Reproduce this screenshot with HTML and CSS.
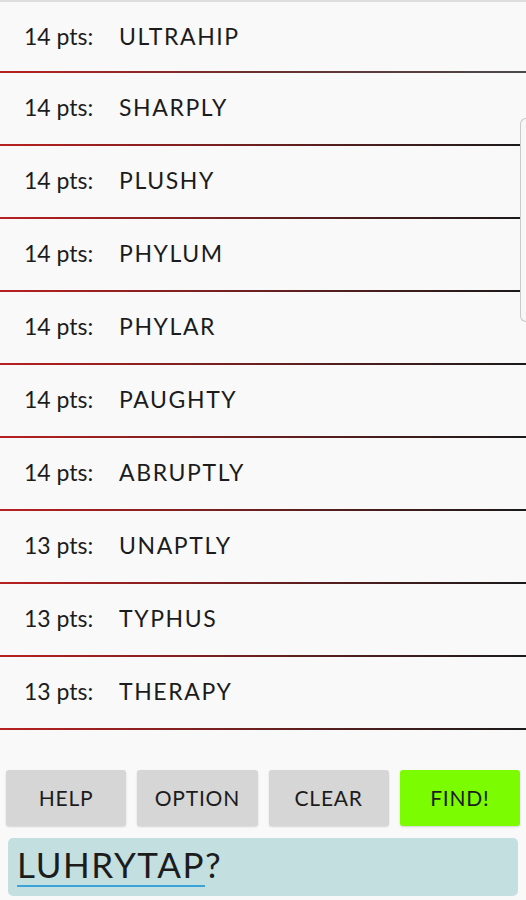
FILE: index.html
```html
<!DOCTYPE html>
<html lang="en">
<head>
    <meta charset="UTF-8">
    <meta name="viewport" content="width=device-width, initial-scale=1.0">
    <title>Word Finder</title>
    <link rel="stylesheet" href="styles.css">
</head>
<body>
    <div class="results">
        <div class="row"><span class="pts">14 pts:</span><span class="word">ULTRAHIP</span></div>
        <div class="row"><span class="pts">14 pts:</span><span class="word">SHARPLY</span></div>
        <div class="row"><span class="pts">14 pts:</span><span class="word">PLUSHY</span></div>
        <div class="row"><span class="pts">14 pts:</span><span class="word">PHYLUM</span></div>
        <div class="row"><span class="pts">14 pts:</span><span class="word">PHYLAR</span></div>
        <div class="row"><span class="pts">14 pts:</span><span class="word">PAUGHTY</span></div>
        <div class="row"><span class="pts">14 pts:</span><span class="word">ABRUPTLY</span></div>
        <div class="row"><span class="pts">13 pts:</span><span class="word">UNAPTLY</span></div>
        <div class="row"><span class="pts">13 pts:</span><span class="word">TYPHUS</span></div>
        <div class="row"><span class="pts">13 pts:</span><span class="word">THERAPY</span></div>
        <div class="scroll-thumb"></div>
    </div>

    <div class="controls">
        <button class="btn">HELP</button>
        <button class="btn">OPTION</button>
        <button class="btn">CLEAR</button>
        <button class="btn btn-find">FIND!</button>
    </div>

    <div class="letters">
        <span class="typed">LUHRYTAP</span>?
    </div>
</body>
</html>
```

FILE: styles.css
```css
body {
    margin: 0;
    background-color: #f9f9f9;
    font-family: Lato, "Liberation Sans", sans-serif;
    color: #1c1c1c;
}
.results {
    position: relative;
    border-top: 2px solid #dedede;
}
.row {
    box-sizing: border-box;
    height: 73px;
    display: flex;
    align-items: center;
    padding-bottom: 5px;
    font-size: 23px;
    background-image: linear-gradient(to right, #b82020, #6a2020 50%, #1a1a1a);
    background-size: 100% 2px;
    background-position: bottom;
    background-repeat: no-repeat;
}
.row:first-child {
    height: 71px;
    padding-bottom: 3px;
    background-image: linear-gradient(to right, #b82020, #6a3030 50%, #4a4a4a);
}
.pts {
    width: 95px;
    padding-left: 24px;
}
.word {
    letter-spacing: 1.6px;
}
.scroll-thumb {
    position: absolute;
    right: 0;
    top: 116px;
    width: 5px;
    height: 202px;
    border: 1px solid #c8c8c8;
    border-right: none;
    border-radius: 6px 0 0 6px;
    background-color: #f7f7f7;
}
.controls {
    display: flex;
    gap: 11px;
    padding: 0 6px;
    margin-top: 40px;
}
.btn {
    flex: 1;
    height: 56px;
    padding-bottom: 3px;
    border: none;
    border-radius: 3px;
    background-color: #d6d6d6;
    box-shadow: 0 1px 2px rgba(0, 0, 0, 0.15);
    font-family: Lato, "Liberation Sans", sans-serif;
    font-size: 21px;
    letter-spacing: 0.8px;
    color: #1c1c1c;
}
.btn-find {
    background-color: #7cfc00;
}
.letters {
    margin: 12px 8px 0;
    height: 58px;
    box-sizing: border-box;
    padding: 0 9px;
    border-radius: 5px;
    background-color: #c3dfe0;
    font-size: 35px;
    line-height: 52px;
    letter-spacing: 1.6px;
}
.typed {
    border-bottom: 2px solid #3ba3d9;
}
```
